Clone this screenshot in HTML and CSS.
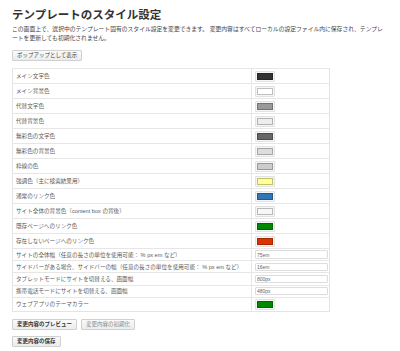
FILE: index.html
```html
<!DOCTYPE html>
<html lang="ja">

<head>
	<meta charset="UTF-8">
	<title>テンプレートのスタイル設定</title>
	<link rel="stylesheet" href="styles.css">
</head>

<body>
	<h1 class="title">テンプレートのスタイル設定</h1>
	<p class="desc">この画面上で、選択中のテンプレート固有のスタイル設定を変更できます。 変更内容はすべてローカルの設定ファイル内に保存され、テンプレートを更新しても初期化されません。</p>
	<div class="actions top">
		<button class="btn">ポップアップとして表示</button>
	</div>

	<table class="settings">
		<tr><td class="label">メイン文字色</td><td class="value"><span class="swatch"><i style="background:#333333"></i></span></td></tr>
		<tr><td class="label">メイン背景色</td><td class="value"><span class="swatch"><i style="background:#ffffff"></i></span></td></tr>
		<tr><td class="label">代替文字色</td><td class="value"><span class="swatch"><i style="background:#999999"></i></span></td></tr>
		<tr><td class="label">代替背景色</td><td class="value"><span class="swatch"><i style="background:#eeeeee"></i></span></td></tr>
		<tr><td class="label">無彩色の文字色</td><td class="value"><span class="swatch"><i style="background:#666666"></i></span></td></tr>
		<tr><td class="label">無彩色の背景色</td><td class="value"><span class="swatch"><i style="background:#dddddd"></i></span></td></tr>
		<tr><td class="label">枠線の色</td><td class="value"><span class="swatch"><i style="background:#cccccc"></i></span></td></tr>
		<tr><td class="label">強調色（主に検索結果用）</td><td class="value"><span class="swatch"><i style="background:#ffff99"></i></span></td></tr>
		<tr><td class="label">通常のリンク色</td><td class="value"><span class="swatch"><i style="background:#3376b8"></i></span></td></tr>
		<tr><td class="label">サイト全体の背景色（content box の背後）</td><td class="value"><span class="swatch"><i style="background:#f7f7f7"></i></span></td></tr>
		<tr><td class="label">既存ページへのリンク色</td><td class="value"><span class="swatch"><i style="background:#008800"></i></span></td></tr>
		<tr><td class="label">存在しないページへのリンク色</td><td class="value"><span class="swatch"><i style="background:#dd3300"></i></span></td></tr>
		<tr class="text-row"><td class="label">サイトの全体幅（任意の長さの単位を使用可能： % px em など）</td><td class="value"><input class="field" type="text" value="75em"></td></tr>
		<tr class="text-row"><td class="label">サイドバーがある場合、サイドバーの幅（任意の長さの単位を使用可能： % px em など）</td><td class="value"><input class="field" type="text" value="16em"></td></tr>
		<tr class="text-row"><td class="label">タブレットモードにサイトを切替える、画面幅</td><td class="value"><input class="field" type="text" value="800px"></td></tr>
		<tr class="text-row"><td class="label">携帯電話モードにサイトを切替える、画面幅</td><td class="value"><input class="field" type="text" value="480px"></td></tr>
		<tr><td class="label">ウェブアプリのテーマカラー</td><td class="value"><span class="swatch"><i style="background:#008800"></i></span></td></tr>
	</table>

	<div class="actions">
		<button class="btn strong">変更内容のプレビュー</button>
		<button class="btn muted">変更内容の初期化</button>
	</div>
	<div class="actions">
		<button class="btn strong">変更内容の保存</button>
	</div>
</body>

</html>
```

FILE: styles.css
```css
/* 基本 */
body {
	margin: 0;
	padding: 0 12px;
	background: #fff;
	color: #333;
	font-family: "Liberation Sans", "Noto Sans CJK JP", sans-serif;
}

.title {
	margin: 8px 0 0;
	font-size: 11.5px;
	line-height: 14px;
	font-weight: 700;
	color: #333;
}

.desc {
	margin: 2.5px 0 0;
	font-size: 5.8px;
	line-height: 9px;
	color: #444;
}

/* ボタン */
.actions {
	display: flex;
	gap: 4px;
	margin-top: 6px;
}

.actions.top {
	margin-top: 7.5px;
}

.btn {
	height: 11px;
	padding: 0 4px;
	border: 1px solid #d0d0d0;
	border-radius: 1px;
	background: linear-gradient(#fafafa, #ececec);
	color: #444;
	font-family: inherit;
	font-size: 5.5px;
	line-height: 9px;
	cursor: pointer;
}

.btn.strong {
	font-weight: 700;
	color: #333;
}

.btn.muted {
	color: #888;
}

/* 設定テーブル */
.settings {
	width: 318px;
	margin: 7px 0 7px;
	border-collapse: collapse;
	border: 1px solid #e4e4e4;
	font-size: 5.6px;
	color: #5a5a5a;
}

.settings td {
	height: 14px;
	padding: 0 0 0 3px;
	border-top: 1px solid #e6e6e6;
	vertical-align: middle;
}

.settings .label {
	width: 235px;
	white-space: nowrap;
	overflow: hidden;
}

.settings .value {
	border-left: 1px solid #e6e6e6;
}

.settings .text-row td {
	height: 11.2px;
}

.settings tr:last-child td {
	height: 13.4px;
}

.swatch {
	display: flex;
	align-items: center;
	justify-content: center;
	width: 18px;
	height: 9px;
	border: 1px solid #e2e2e2;
	border-radius: 1px;
	background: #f6f6f6;
}

.swatch i {
	display: block;
	width: 14px;
	height: 5px;
	border: 1px solid rgba(0, 0, 0, 0.25);
}

.field {
	display: block;
	box-sizing: border-box;
	width: 73px;
	height: 8.5px;
	margin: 0;
	padding: 0 1px;
	border: 1px solid #dcdcdc;
	border-radius: 1px;
	font-family: inherit;
	font-size: 5px;
	color: #666;
}
```
